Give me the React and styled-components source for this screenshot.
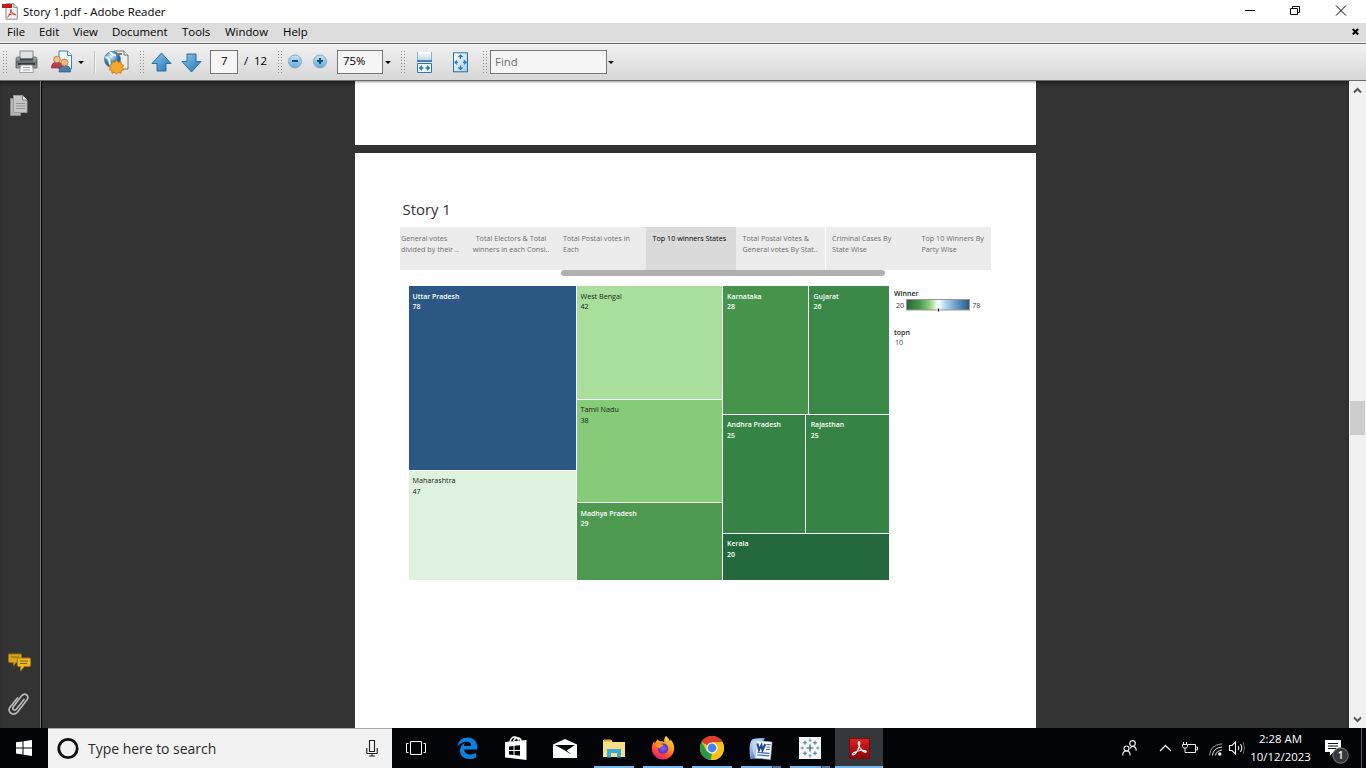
import React from "react";
import styled, { createGlobalStyle } from "styled-components";

const Global = createGlobalStyle`
  html, body { margin: 0; padding: 0; background: #333; overflow: hidden; }
  * { box-sizing: border-box; }
  svg { display: block; flex: none; }
`;

const Screen = styled.div`
  width: 1366px;
  height: 768px;
  display: flex;
  flex-direction: column;
  overflow: hidden;
  font-family: "Open Sans", "Noto Sans", sans-serif;
  font-size: 11.4px;
  color: #000;
  white-space: nowrap;
`;

/* ---------- window chrome ---------- */
const TitleBar = styled.div`
  height: 23px;
  background: #fff;
  display: flex;
  align-items: center;
  padding: 0 19px 0 2px;
`;
const WindowTitle = styled.span`
  margin-left: 5px;
  flex: 1;
  line-height: 23px;
`;
const WindowControls = styled.div`
  display: flex;
  align-items: center;
  gap: 35px;
  padding-bottom: 3px;
`;
const MenuBar = styled.div`
  height: 20px;
  background: #ddd;
  border-bottom: 1px solid #f4f4f4;
  display: flex;
  align-items: center;
  padding: 0 7px 2px 7px;
`;
const MenuItem = styled.span`
  width: ${(p) => p.$w}px;
  line-height: 18px;
`;
const MenuSpacer = styled.div`
  flex: 1;
`;
const ToolBar = styled.div`
  height: 38px;
  border-top: 1px solid #6b6b6b;
  border-bottom: 1px solid #6b6d6b;
  background: linear-gradient(#f1f1f1, #d7d7d7);
  display: flex;
  align-items: center;
`;
const ToolSlot = styled.div`
  width: ${(p) => p.$w}px;
  height: 36px;
  flex: none;
  display: flex;
  align-items: center;
`;
const PageCount = styled.div`
  padding-bottom: 3px;
`;
const Grip = styled.div`
  width: 4px;
  height: 23px;
  background: radial-gradient(circle at 0.5px 0.5px, #8d8d8d 0.7px, transparent 0.9px) 0 0 / 3px 3px;
`;
const Divider = styled.div`
  width: 2px;
  height: 22px;
  background: #c2c2c2;
  border-right: 1px solid #f4f4f4;
`;
const Field = styled.div`
  width: ${(p) => p.$w}px;
  height: 24px;
  border: 1px solid #777;
  background: #f5f5f5;
  color: ${(p) => p.$color || "#000"};
  padding-left: ${(p) => p.$pad}px;
  line-height: ${(p) => p.$line || 20}px;
`;
const Caret = styled.div`
  border: 3px solid transparent;
  border-top-color: #000;
  border-bottom: 0;
`;

/* ---------- reader body ---------- */
const Body = styled.div`
  height: 647px;
  display: flex;
  background: #333;
`;
const SideBar = styled.div`
  width: 42px;
  border-right: 1px solid #000;
  box-shadow: inset -1px 0 0 #777, inset 0 4px 4px -2px #1c1c1c;
  display: flex;
  flex-direction: column;
  padding: 13px 0 12px 8px;
`;
const SideTools = styled.div`
  margin-top: auto;
  display: flex;
  flex-direction: column;
  gap: 20px;
`;
const Canvas = styled.div`
  flex: 1;
  display: flex;
  flex-direction: column;
  gap: 8px;
  padding-left: 313px;
  box-shadow: inset 0 4px 4px -2px #1c1c1c;
`;
const PreviousPage = styled.div`
  width: 681px;
  height: 64px;
  background: linear-gradient(#adadad, #e8e8e8 2px, #fff 3px);
`;
const Page = styled.div`
  width: 681px;
  flex: 1;
  background: #fff;
  padding: 45px 45px 0;
  color: #333;
`;
const StoryTitle = styled.div`
  height: 29px;
  padding-left: 2.5px;
  font-size: 14.9px;
  line-height: 23px;
`;
const Tabs = styled.div`
  display: flex;
  width: 591px;
  height: 43px;
  background: #ececec;
  font-size: 7.2px;
  line-height: 11px;
  color: #6c6c6c;
`;
const Tab = styled.div`
  width: ${(p) => p.$w}px;
  flex: none;
  padding: 6px 0 0 ${(p) => p.$pad}px;
  border-right: ${(p) => (p.$edge ? "1px solid #fff" : "0")};
  background: ${(p) => (p.$active ? "#dadada" : "transparent")};
  color: ${(p) => (p.$active ? "#000" : "inherit")};
  text-align: ${(p) => p.$align || "left"};
`;
const TabScroll = styled.div`
  width: 324px;
  height: 6px;
  margin-left: 161px;
  border-radius: 3px;
  background: #b0b0b0;
`;
const Dashboard = styled.div`
  display: flex;
  margin: 10px 0 0 9px;
`;
const TreeMap = styled.div`
  width: 480px;
  height: 294px;
  display: flex;
  gap: 1px;
`;
const MapColumn = styled.div`
  width: ${(p) => p.$w}px;
  display: flex;
  flex-direction: column;
  gap: 1px;
`;
const MapRow = styled.div`
  display: flex;
  gap: 1px;
`;
const Cell = styled.div`
  width: ${(p) => (p.$w ? p.$w + "px" : "auto")};
  height: ${(p) => p.$h}px;
  flex: none;
  background: ${(p) => p.$bg};
  color: ${(p) => (p.$light ? "#fff" : "#1c241c")};
  font-weight: ${(p) => (p.$light ? 600 : 400)};
  font-size: ${(p) => (p.$light ? 6.95 : 7.2)}px;
  line-height: ${(p) => p.$line || 11}px;
  padding: ${(p) => p.$top || 4}px 0 0 ${(p) => p.$pad || 4}px;
`;
const Legend = styled.div`
  padding-left: 5px;
  padding-top: 3px;
  font-size: 7.2px;
  line-height: 10px;
  color: #444;
`;
const LegendTitle = styled.div`
  font-weight: 600;
  font-size: 7px;
  color: #222;
`;
const LegendScale = styled.div`
  display: flex;
  gap: 2px;
  padding-left: 2px;
  line-height: 13px;
  height: 13px;
  margin-bottom: 16px;
`;
const LegendValue = styled.div`
  padding-left: 1px;
  line-height: 9px;
`;
const ScrollBar = styled.div`
  width: 17px;
  background: #f0f0f0;
  display: flex;
  flex-direction: column;
  align-items: center;
  padding: 6px 0 5px;
`;
const Thumb = styled.div`
  width: 15px;
  height: 34px;
  background: #cdcdcd;
  margin-top: 307px;
  margin-bottom: auto;
`;

/* ---------- taskbar ---------- */
const TaskBar = styled.div`
  height: 40px;
  background: #020408;
  display: flex;
  color: #fff;
`;
const StartButton = styled.div`
  width: 48px;
  display: flex;
  align-items: center;
  justify-content: center;
`;
const SearchBox = styled.div`
  width: 344px;
  background: #f2f2f2;
  border-top: 1px solid #a9a9a9;
  display: flex;
  align-items: center;
  padding: 0 14px 0 8px;
  color: #2b2b2b;
  font-size: 13.95px;
`;
const SearchText = styled.span`
  flex: 1;
  margin-left: 8px;
`;
const Apps = styled.div`
  display: flex;
  gap: 1px;
`;
const AppButton = styled.div`
  width: 48px;
  height: 40px;
  display: flex;
  flex-direction: column;
  align-items: center;
  background: ${(p) => (p.$active ? "#34373b" : "transparent")};
  margin-right: ${(p) => p.$mr || 0}px;
`;
const AppIcon = styled.div`
  height: 38px;
  padding-top: 2px;
  display: flex;
  align-items: center;
`;
const Running = styled.div`
  width: ${(p) => (p.$full ? 48 : 40)}px;
  height: 2px;
  background: ${(p) => (p.$stacked ? "linear-gradient(90deg, #76b9ed 31px, #203a52 31px, #203a52 32px, #4a7ba3 32px)" : "#76b9ed")};
`;
const Tray = styled.div`
  margin-left: auto;
  display: flex;
  align-items: center;
`;
const TrayIcon = styled.div`
  width: ${(p) => p.$w}px;
  padding-top: ${(p) => p.$top || 0}px;
`;
const Clock = styled.div`
  width: 71px;
  text-align: center;
  line-height: 18px;
  padding: 0 0 1px;
  color: #fff;
`;
const ShowDesktop = styled.div`
  width: 5px;
  height: 40px;
  border-left: 1px solid #55585c;
`;

/* ---------- drawings ---------- */
const PdfIcon = () => (
  <svg width="16" height="17" viewBox="0 0 16 17">
    <path d="M4 .8h8l3.3 3.4v12H4z" fill="#f5f5f5" stroke="#8a8a8a" />
    <path d="M11.8 1v3.5h3.5" fill="#ddd" stroke="#8a8a8a" strokeWidth=".8" />
    <rect y="1" width="10" height="4" fill="#c3171c" />
    <path d="M9 6.500c0 3-2 6-3.500 8M9 6.500c0 3 2 5 5 5.500M6.500 12q3-1.700 7-.8" fill="none" stroke="#d8352c" />
  </svg>
);
const Printer = () => (
  <svg width="24" height="24" viewBox="0 0 24 24">
    <defs>
      <linearGradient id="prn" x2="0" y2="1"><stop stopColor="#b7bbbd" /><stop offset=".45" stopColor="#64696c" /><stop offset="1" stopColor="#9a9ea1" /></linearGradient>
    </defs>
    <rect x="5" y="1" width="13" height="8" fill="#dfe4e7" stroke="#868b8e" />
    <path d="M1 9q0-2 2-2h2v2.500h13V7h2q2 0 2 2v9H1z" fill="url(#prn)" stroke="#54595c" strokeWidth=".8" />
    <rect x="5" y="8.500" width="13" height="2" fill="#3b4043" />
    <rect x="3" y="13" width="17" height="2" fill="#34393c" />
    <path d="M5.500 15h12l1 7.500h-14z" fill="#f4f6f7" stroke="#8d9295" strokeWidth=".8" />
    <path d="M8 17.500h7M8 20h7" stroke="#a3acb2" />
    <rect x="18.500" y="10" width="2" height="1.500" fill="#72c25f" />
  </svg>
);
const People = () => (
  <svg width="24" height="24" viewBox="0 0 24 24">
    <path d="M8 1h8.500l4 4v14H8z" fill="#eaf4fb" stroke="#3f86b8" />
    <path d="M16.500 1v4.500h4" fill="#fff" stroke="#3f86b8" />
    <path d="M.5 18q0-6 5.500-6t6 6z" fill="#b73b52" stroke="#7d2438" strokeWidth=".7" />
    <circle cx="6" cy="9.500" r="3.300" fill="#f3c08a" stroke="#b2703c" strokeWidth=".8" />
    <path d="M8 22q0-6.500 6-6.500t5.500 6.500z" fill="#4d7ca8" stroke="#28547c" strokeWidth=".7" />
    <circle cx="13.500" cy="12.500" r="3.400" fill="#f5b872" stroke="#b2703c" strokeWidth=".8" />
  </svg>
);
const GlobeStar = () => (
  <svg width="27" height="25" viewBox="0 0 27 25">
    <defs>
      <radialGradient id="glb" cx=".4" cy=".3"><stop stopColor="#e3f3fb" /><stop offset=".6" stopColor="#63a6d0" /><stop offset="1" stopColor="#25669a" /></radialGradient>
    </defs>
    <path d="M10 1h10l4 4v14H11z" fill="#ececec" stroke="#747474" />
    <path d="M20 1v4h4" fill="#fff" stroke="#747474" />
    <circle cx="8.500" cy="9.500" r="8" fill="url(#glb)" stroke="#3b7fae" strokeWidth=".8" />
    <path d="M11 4h7" stroke="#777" strokeWidth="2" />
    <path d="M1.500 7q4 1 4 5t4 4M6 2q2 3 6 3.500" fill="none" stroke="#e9f6fc" strokeWidth="2" />
    <path d="M12.500 10l1.700 2.300 2.800-.8.200 2.900 2.800 1-1.800 2.100 1.800 2.200-2.800.8-.2 2.700-2.800-.7-1.700 1.500-1.700-1.500-2.800.7-.2-2.700-2.800-.8 1.800-2.200-1.800-2.100 2.800-1 .2-2.900 2.800.8z" fill="#f4a82b" stroke="#bd7511" strokeWidth=".8" />
  </svg>
);
const Arrow = ({ down }) => (
  <svg width="21" height="21" viewBox="0 0 21 21">
    <defs>
      <linearGradient id={down ? "ad" : "au"} x1={down ? 1 : 0} y1={down ? 1 : 0} x2={down ? 0 : 1} y2={down ? 0 : 1}><stop stopColor="#8dcaf0" /><stop offset="1" stopColor="#1b72b2" /></linearGradient>
    </defs>
    <path d="M10.500 1L20 11.500h-5v7.500H6v-7.500H1z" transform={down ? "rotate(180 10.500 10.500)" : undefined} fill={`url(#${down ? "ad" : "au"})`} stroke="#2b6f9f" strokeLinejoin="round" />
  </svg>
);
const ZoomButton = ({ plus }) => (
  <svg width="16" height="16" viewBox="0 0 16 16">
    <defs>
      <linearGradient id={plus ? "zp" : "zm"} x2="0" y2="1"><stop stopColor="#cbe4f4" /><stop offset="1" stopColor="#5fa9d9" /></linearGradient>
    </defs>
    <circle cx="8" cy="7.500" r="6.500" fill={`url(#${plus ? "zp" : "zm"})`} stroke="#86a9c0" />
    <path d={plus ? "M5 7h6M8 4v6" : "M5 7h6"} stroke="#134d80" strokeWidth="2" />
  </svg>
);
const FitWidth = () => (
  <svg width="18" height="21" viewBox="0 0 18 21">
    <defs><linearGradient id="fw" x2="0" y2="1"><stop stopColor="#fff" /><stop offset="1" stopColor="#b9d7ea" /></linearGradient></defs>
    <path d="M1.500 0v9h14V0" fill="url(#fw)" stroke="#7fb0cf" />
    <path d="M1 9h15" stroke="#2b6d9c" strokeWidth="1.500" />
    <path d="M1.500 20.500v-9h14v9z" fill="#edf5fa" stroke="#2f78aa" />
    <path d="M4 16h3.500M9.500 16H13M6 13.700L3.700 16 6 18.300M11 13.700l2.300 2.300-2.300 2.300" fill="none" stroke="#2877b0" strokeWidth="1.300" />
  </svg>
);
const FitPage = () => (
  <svg width="18" height="21" viewBox="0 0 18 21">
    <defs><linearGradient id="fp" x2="1" y2="1"><stop stopColor="#fff" /><stop offset="1" stopColor="#a5cbe4" /></linearGradient></defs>
    <rect x="1.500" y=".8" width="14" height="19" fill="url(#fp)" stroke="#2c6f9f" />
    <path d="M8.500 3v4M8.500 13.500v4M3 10.300h3M11 10.300h3M6.500 5l2-2 2 2M6.500 15.500l2 2 2-2M5 8.300l-2 2 2 2M12 8.300l2 2-2 2" fill="none" stroke="#2877b0" strokeWidth="1.200" />
  </svg>
);
const Minimize = () => (
  <svg width="10" height="11"><path d="M0 5.500h10" stroke="#000" /></svg>
);
const Restore = () => (
  <svg width="10" height="11" viewBox="0 0 10 11"><path d="M.5 3.500h7v6h-7zM2.500 3.500v-2h7v6h-2" fill="none" stroke="#000" /></svg>
);
const Close = () => (
  <svg width="12" height="11" viewBox="0 0 12 11"><path d="M1 .5l10 10M11 .5l-10 10" stroke="#000" /></svg>
);
const CloseDoc = () => (
  <svg width="7" height="7" viewBox="0 0 7 7"><path d="M.7 1l5.500 5.500M6.200 1L.7 6.500" stroke="#000" strokeWidth="2" /></svg>
);
const PagesIcon = () => (
  <svg width="22" height="24" viewBox="0 0 22 24">
    <path d="M2.500 4.500h10v17h-10z" fill="#b5b5b5" stroke="#8a8a8a" />
    <path d="M5.500 1.500h9l4.500 4.500v12.500H5.500z" fill="#c6c6c6" stroke="#9c9c9c" />
    <path d="M14.500 1.500V6H19" fill="#eee" stroke="#7a7a7a" />
    <path d="M8 9.500h9M8 12h9M8 14.500h9" stroke="#929292" />
  </svg>
);
const Comments = () => (
  <svg width="24" height="19" viewBox="0 0 24 19">
    <path d="M1.500 1h11q1 0 1 1v6.500q0 1-1 1H8L5.500 13V9.500h-4q-1 0-1-1V2q0-1 1-1z" fill="#d8a520" stroke="#9c6e10" />
    <path d="M3 4h8" stroke="#8b650c" />
    <path d="M10.500 5h10.800q1.200 0 1.200 1.200v6.100q0 1.200-1.200 1.200h-5L12.500 18v-4.500h-2q-1.200 0-1.200-1.200V6.200q0-1.200 1.200-1.200z" fill="#e8b924" stroke="#a97a12" />
    <path d="M12 8h8M12 10.500h7" stroke="#86600c" />
  </svg>
);
const Clip = () => (
  <svg width="22" height="24" viewBox="0 0 22 24">
    <path d="M16 7.500L8.500 17q-1.500 1.800-3 .6t0-3.200L13.500 4q2.500-3 5-1.200t.5 5L9.500 20q-3 3.600-6.500 1.200t-.800-6.200L9.500 6" fill="none" stroke="#b9b9b9" strokeWidth="1.700" strokeLinecap="round" />
  </svg>
);
const Chevron = ({ down }) => (
  <svg width="9" height="7" viewBox="0 0 9 7"><path d={down ? "M1 1.500l3.500 3.500L8 1.500" : "M1 5.500L4.500 2 8 5.500"} fill="none" stroke="#555" strokeWidth="2" /></svg>
);
const LegendBar = () => (
  <svg width="64" height="13" viewBox="0 0 64 13">
    <defs>
      <linearGradient id="scale">
        <stop stopColor="#24693d" /><stop offset=".2" stopColor="#46954d" /><stop offset=".37" stopColor="#8fd182" />
        <stop offset=".5" stopColor="#fff" /><stop offset=".6" stopColor="#bddcef" /><stop offset=".78" stopColor="#6a9fcc" /><stop offset="1" stopColor="#2a5783" />
      </linearGradient>
    </defs>
    <rect x=".5" y=".5" width="63" height="10.500" fill="url(#scale)" stroke="#9b998c" />
    <path d="M32.500 9.500v3" stroke="#000" />
  </svg>
);
const WindowsLogo = () => (
  <svg width="16" height="16" viewBox="0 0 16 16"><path d="M0 2.300l6.500-.9v6H0zM7.500 1.200L16 0v7.400H7.500zM0 8.500h6.500v6L0 13.600zM7.500 8.500H16V16l-8.500-1.200z" fill="#fff" /></svg>
);
const Cortana = () => (
  <svg width="24" height="24"><circle cx="12" cy="11.500" r="9.200" fill="none" stroke="#111" strokeWidth="2.800" /></svg>
);
const Mic = () => (
  <svg width="12" height="17" viewBox="0 0 12 17"><path d="M3.500.5h5v11h-5zM.8 8v4.500q0 1 1 1h8.400q1 0 1-1V8M6 13.500v3M3 16h6" fill="none" stroke="#222" strokeWidth="1.100" /></svg>
);
const TaskView = () => (
  <svg width="20" height="14" viewBox="0 0 20 14"><path d="M4.500.5h11v13h-11zM2.500 2.500h-2v9h2M17.500 2.500h2v9h-2" fill="none" stroke="#fff" /></svg>
);
const Edge = () => (
  <svg width="21" height="22" viewBox="0 0 21 22"><path d="M.4 9.600C1.200 3.500 5.500.4 10.600.4c6.500 0 9.700 4.700 9.700 9.700v2.500H7.200c.2 3.500 3 4.900 6 4.900 2.600 0 4.400-.8 6-1.700v4.600c-2 1.100-4.200 1.500-6.900 1.500-6.200 0-9.300-3.700-9.300-8.300 0-3.500 1.800-6.200 5-7.800-.600.8-1 1.900-1.100 3.100h7.200c0-2.800-1.400-4.200-4.200-4.200-3.600 0-7.200 1.900-9.500 4.900z" fill="#0d7fdc" /></svg>
);
const Store = () => (
  <svg width="22" height="24" viewBox="0 0 22 24">
    <path d="M5 6q1-5 4.500-5t4 3.500M8.500 5q2-4 5-3t2.500 4" fill="none" stroke="#fff" strokeWidth="1.500" />
    <path d="M0 6l21.500-2v20L0 21.500z" fill="#fff" />
    <path d="M4 10.500l4.500-.5v4H4zM9.500 9.800l5.500-.6v4.800H9.500zM4 15h4.500v4l-4.500-.5zM9.500 15H15v4.700l-5.500-.6z" fill="#020408" />
  </svg>
);
const Mail = () => (
  <svg width="24" height="19" viewBox="0 0 24 19"><path d="M0 5.500L12 0l12 5.500V19H0z" fill="#fff" /><path d="M2 6h20l-8.300 5.500 4.500 4-7.200-4.500z" fill="#020408" /></svg>
);
const Folder = () => (
  <svg width="22" height="19" viewBox="0 0 22 19">
    <path d="M0 1h8.500l1 2H22v15H0z" fill="#f9dd87" /><path d="M1 1.500h7" stroke="#e8ac23" strokeWidth="2" />
    <path d="M4 18.500V10h14v8.500h-4V14H8v4.500z" fill="#35abe0" />
  </svg>
);
const Firefox = () => (
  <svg width="24" height="24" viewBox="0 0 24 24">
    <defs>
      <linearGradient id="ff" x1=".8" y1="0" x2=".3" y2="1"><stop stopColor="#ffe34a" /><stop offset=".4" stopColor="#ff9b20" /><stop offset=".75" stopColor="#ff4340" /><stop offset="1" stopColor="#e51c78" /></linearGradient>
      <radialGradient id="fg"><stop stopColor="#8d5cff" /><stop offset="1" stopColor="#5233b5" /></radialGradient>
    </defs>
    <path d="M15 0c2 1.500 3.500 3.500 4 5.500.5-.7.500-1.500.4-2.200 2.500 2.500 3.800 5.500 3.800 9C23.200 19 18 23.500 12 23.500S.8 18.800.8 12.500c0-3 1-5.500 2.700-7.500v2.500C4.500 6 6 4.500 6.500 3c.5 1 1.200 1.800 2.500 2.300 2-.3 3.500.2 4.500 1C12.500 4 13.500 1.500 15 0z" fill="url(#ff)" />
    <circle cx="12" cy="12.500" r="5.200" fill="url(#fg)" />
    <path d="M5 8.500c3-1.500 5 0 7.500.5-1 2-3.500 1.500-4 3.500-1.500-1-3-2-3.500-4z" fill="#ff9a25" />
  </svg>
);
const Chrome = () => (
  <svg width="24" height="24" viewBox="0 0 24 24">
    <circle cx="12" cy="12" r="12" fill="#fbc116" />
    <path d="M12 12L1.600 6A12 12 0 0 1 22.400 6H12z" fill="#e33b2e" />
    <path d="M1.600 6L6.800 15 12 18l-1.500 5.900A12 12 0 0 1 1.600 6z" fill="#269a49" />
    <path d="M12 6h10.400A12 12 0 0 1 10.500 24l6.700-9z" fill="#fbc116" />
    <circle cx="12" cy="12" r="5.600" fill="#fff" /><circle cx="12" cy="12" r="4.400" fill="#4285f4" />
  </svg>
);
const Word = () => (
  <svg width="24" height="23" viewBox="0 0 24 23">
    <defs><linearGradient id="wd" x2="1" y2="1"><stop stopColor="#dbe8f8" /><stop offset=".5" stopColor="#6d9bd6" /><stop offset="1" stopColor="#2a56a2" /></linearGradient></defs>
    <path d="M3 2.500Q6 .5 16 1l-2 4-3 16.500-9.500.5Q-1 8 3 2.500z" fill="url(#wd)" />
    <path d="M4 5q2-3 10-3-7 3-8 18-4-7-2-15z" fill="#e3eefb" opacity=".6" />
    <path d="M8 3.500L23 5l-1.500 17.500L6 21z" fill="#f5f8fd" stroke="#a2b7d8" strokeWidth=".6" />
    <path d="M8.500 6.500l1.500 6.500 2.500-5 1 5.300 2.700-6.300" fill="none" stroke="#1d4794" strokeWidth="2" />
    <path d="M17.500 7.500h4M17.500 10h3.700M17 12.500h4M8.500 15.500l12 .8M8 18l12.300.8" stroke="#4169ae" strokeWidth="1.200" />
  </svg>
);
const Tableau = () => (
  <svg width="22" height="22" viewBox="0 0 22 22">
    <rect width="22" height="22" fill="#f6f6f6" />
    <path d="M11 7.500v7M7.500 11h7" stroke="#315c7f" strokeWidth="1.200" />
    <path d="M11 1.500v3.500M9.500 3.200h3M11 17v3.500M9.500 18.800h3M1.500 11H5M3.200 9.500v3M17 11h3.500M18.800 9.500v3" stroke="#6a9fbd" />
    <path d="M6 3.800v4M4 5.800h4M16 3.800v4M14 5.800h4M6 14.200v4M4 16.200h4M16 14.200v4M14 16.200h4" stroke="#4f7d9d" strokeWidth="1.100" />
  </svg>
);
const AcrobatIcon = () => (
  <svg width="21" height="21" viewBox="0 0 21 21">
    <defs><linearGradient id="ac" x2="0" y2="1"><stop stopColor="#e02020" /><stop offset="1" stopColor="#8b0205" /></linearGradient></defs>
    <rect x=".5" y=".5" width="20" height="20" fill="url(#ac)" stroke="#7a0c0c" />
    <path d="M10 3.500c1.500 0 .5 5.500-1.500 9S4.500 17.500 3.500 16.500s4-3.500 8-4 6 .3 5.800 1.300c-.5 1.300-4-.5-6-3.500S8.700 3.500 10 3.500z" fill="none" stroke="#fff" strokeWidth="1.200" />
  </svg>
);
const TrayPeople = () => (
  <svg width="15" height="17" viewBox="0 0 15 17"><g fill="none" stroke="#eee" strokeWidth="1.200"><circle cx="10.500" cy="3.500" r="2.800" /><circle cx="4.500" cy="8.500" r="2.500" /><path d="M.7 15.500q0-4.500 3.800-4.500t3.500 4.500M8 8.500q1-2.200 2.600-2.200 3.600 0 3.600 4.500" /></g></svg>
);
const TrayUp = () => (
  <svg width="13" height="8" viewBox="0 0 13 8"><path d="M1 7l5.500-5.500L12 7" fill="none" stroke="#eee" strokeWidth="1.300" /></svg>
);
const Battery = () => (
  <svg width="16" height="12" viewBox="0 0 16 12"><path d="M6 2.500h7.500v8H5.500M13.500 5h2v3h-2M1.500 0v2M4.500 0v2M.5 2.500h5v2l-1 1.500h-3l-1-1.500zM3 6v4.500h2.500" fill="none" stroke="#eee" /></svg>
);
const Wifi = () => (
  <svg width="14" height="13" viewBox="0 0 14 13"><g fill="none" stroke="#ddd"><path d="M.5 12.500Q1 2 13 .8" stroke="#999" /><path d="M3.500 12.500Q4 5 13 4" /><path d="M6.500 12.500Q7 8 13 7" /></g><circle cx="10.800" cy="11" r="1.700" fill="#fff" /></svg>
);
const Volume = () => (
  <svg width="17" height="14" viewBox="0 0 17 14"><path d="M.5 4.500H3L6.500 1v12L3 9.500H.500zM9 5q1.500 2 0 4M11.500 3q2.500 4 0 8" fill="none" stroke="#eee" strokeWidth="1.100" /><path d="M14 1q3 6 0 12" fill="none" stroke="#666" /></svg>
);
const BadgeText = styled.text`
  font: 600 10px "Open Sans", sans-serif;
  fill: #fff;
`;
const Notices = () => (
  <svg width="26" height="26" viewBox="0 0 26 26">
    <path d="M0 1h16v12H8.500L5 16.500V13H0z" fill="#fff" /><path d="M3 4.500h10M3 7h10M3 9.500h8" stroke="#111" />
    <circle cx="15.500" cy="16.500" r="7.700" fill="#35373a" stroke="#808285" /><BadgeText x="12.700" y="20">1</BadgeText>
  </svg>
);

const menus = [["File", 32], ["Edit", 34], ["View", 39], ["Document", 70], ["Tools", 43], ["Window", 58], ["Help", 40]];
const tabs = [
  { w: 66, pad: 1, lines: ["General votes", "divided by their .."] },
  { w: 90, pad: 0, align: "center", lines: ["Total Electors & Total", "winners in each Consi.."] },
  { w: 90, pad: 7, lines: ["Total Postal votes in", "Each"] },
  { w: 90, pad: 6.5, active: true, lines: ["Top 10 winners States"] },
  { w: 90, pad: 6.5, edge: true, lines: ["Total Postal Votes &", "General votes By Stat.."] },
  { w: 90, pad: 6, lines: ["Criminal Cases By", "State Wise"] },
  { w: 75, pad: 5.5, lines: ["Top 10 Winners By", "Party Wise"] },
];
const apps = [
  { icon: <TaskView />, mr: 2 },
  { icon: <Edge /> },
  { icon: <Store /> },
  { icon: <Mail /> },
  { icon: <Folder />, running: true },
  { icon: <Firefox />, running: true },
  { icon: <Chrome />, running: true },
  { icon: <Word />, running: true, stacked: true },
  { icon: <Tableau />, running: true, stacked: true },
  { icon: <AcrobatIcon />, running: true, active: true },
];

const State = ({ name, value, ...rest }) => (
  <Cell {...rest}>
    <div>{name}</div>
    <div>{value}</div>
  </Cell>
);

export default function App() {
  return (
    <Screen>
      <Global />
      <TitleBar>
        <PdfIcon />
        <WindowTitle>Story 1.pdf - Adobe Reader</WindowTitle>
        <WindowControls><Minimize /><Restore /><Close /></WindowControls>
      </TitleBar>
      <MenuBar>
        {menus.map(([label, w]) => <MenuItem key={label} $w={w}>{label}</MenuItem>)}
        <MenuSpacer />
        <CloseDoc />
      </MenuBar>
      <ToolBar>
        <ToolSlot $w={3} />
        <ToolSlot $w={12}><Grip /></ToolSlot>
        <ToolSlot $w={36}><Printer /></ToolSlot>
        <ToolSlot $w={27}><People /></ToolSlot>
        <ToolSlot $w={16}><Caret /></ToolSlot>
        <ToolSlot $w={10}><Divider /></ToolSlot>
        <ToolSlot $w={36}><GlobeStar /></ToolSlot>
        <ToolSlot $w={11}><Grip /></ToolSlot>
        <ToolSlot $w={30}><Arrow /></ToolSlot>
        <ToolSlot $w={29}><Arrow down /></ToolSlot>
        <ToolSlot $w={34}><Field $w={28} $pad={10}>7</Field></ToolSlot>
        <ToolSlot $w={34}><PageCount>/&nbsp; 12</PageCount></ToolSlot>
        <ToolSlot $w={9}><Grip /></ToolSlot>
        <ToolSlot $w={25}><ZoomButton /></ToolSlot>
        <ToolSlot $w={25}><ZoomButton plus /></ToolSlot>
        <ToolSlot $w={48}><Field $w={46} $pad={5}>75%</Field></ToolSlot>
        <ToolSlot $w={16}><Caret /></ToolSlot>
        <ToolSlot $w={15}><Grip /></ToolSlot>
        <ToolSlot $w={36}><FitWidth /></ToolSlot>
        <ToolSlot $w={31}><FitPage /></ToolSlot>
        <ToolSlot $w={7}><Grip /></ToolSlot>
        <ToolSlot $w={118}><Field $w={117} $pad={4} $line={22} $color="#6d6d6d">Find</Field></ToolSlot>
        <ToolSlot $w={10}><Caret /></ToolSlot>
      </ToolBar>
      <Body>
        <SideBar>
          <PagesIcon />
          <SideTools>
            <Comments />
            <Clip />
          </SideTools>
        </SideBar>
        <Canvas>
          <PreviousPage />
          <Page>
            <StoryTitle>Story 1</StoryTitle>
            <Tabs>
              {tabs.map((t) => (
                <Tab key={t.lines[0]} $w={t.w} $pad={t.pad} $align={t.align} $active={t.active} $edge={t.edge}>
                  {t.lines.map((l) => <div key={l}>{l}</div>)}
                </Tab>
              ))}
            </Tabs>
            <TabScroll />
            <Dashboard>
              <TreeMap>
                <MapColumn $w={167}>
                  <State $h={184} $bg="#2a5783" $light $top={6} $line={10} $pad={3.5} name="Uttar Pradesh" value="78" />
                  <State $h={109} $bg="#dff2de" $pad={3.5} name="Maharashtra" value="47" />
                </MapColumn>
                <MapColumn $w={145}>
                  <State $h={113} $bg="#a7df9b" $top={5} $line={10} $pad={3.5} name="West Bengal" value="42" />
                  <State $h={102} $bg="#86cb78" $pad={3.5} name="Tamil Nadu" value="38" />
                  <State $h={77} $bg="#4d9950" $light $top={6} $line={10} $pad={3.5} name="Madhya Pradesh" value="29" />
                </MapColumn>
                <MapColumn $w={166}>
                  <MapRow>
                    <State $w={85} $h={128} $bg="#46944c" $light $top={6} $line={10} name="Karnataka" value="28" />
                    <State $w={80} $h={128} $bg="#3a8948" $light $top={6} $line={10} $pad={4.5} name="Gujarat" value="26" />
                  </MapRow>
                  <MapRow>
                    <State $w={82} $h={118} $bg="#358445" $light name="Andhra Pradesh" value="25" />
                    <State $w={83} $h={118} $bg="#358445" $light $pad={4.7} name="Rajasthan" value="25" />
                  </MapRow>
                  <State $h={46} $bg="#24693d" $light name="Kerala" value="20" />
                </MapColumn>
              </TreeMap>
              <Legend>
                <LegendTitle>Winner</LegendTitle>
                <LegendScale><span>20</span><LegendBar /><span>78</span></LegendScale>
                <LegendTitle>topn</LegendTitle>
                <LegendValue>10</LegendValue>
              </Legend>
            </Dashboard>
          </Page>
        </Canvas>
        <ScrollBar>
          <Chevron />
          <Thumb />
          <Chevron down />
        </ScrollBar>
      </Body>
      <TaskBar>
        <StartButton><WindowsLogo /></StartButton>
        <SearchBox><Cortana /><SearchText>Type here to search</SearchText><Mic /></SearchBox>
        <Apps>
          {apps.map((a, i) => (
            <AppButton key={i} $active={a.active} $mr={a.mr}>
              <AppIcon>{a.icon}</AppIcon>
              {a.running && <Running $full={a.active} $stacked={a.stacked} />}
            </AppButton>
          ))}
        </Apps>
        <Tray>
          <TrayIcon $w={37}><TrayPeople /></TrayIcon>
          <TrayIcon $w={23}><TrayUp /></TrayIcon>
          <TrayIcon $w={27}><Battery /></TrayIcon>
          <TrayIcon $w={20} $top={2}><Wifi /></TrayIcon>
          <TrayIcon $w={16}><Volume /></TrayIcon>
          <Clock><div>2:28 AM</div><div>10/12/2023</div></Clock>
          <TrayIcon $w={9} />
          <TrayIcon $w={36} $top={8}><Notices /></TrayIcon>
          <ShowDesktop />
        </Tray>
      </TaskBar>
    </Screen>
  );
}
